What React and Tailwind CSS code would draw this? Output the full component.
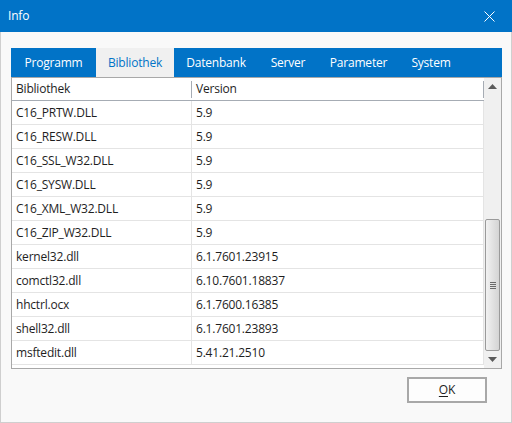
import React from "react";

// widths taken from the dialog, text is centred in each tab
const TABS = [
  { label: "Programm", width: "w-[85px]" },
  { label: "Bibliothek", width: "w-[78px]" },
  { label: "Datenbank", width: "w-[84px]" },
  { label: "Server", width: "w-[60px]" },
  { label: "Parameter", width: "w-[81px]" },
  { label: "System", width: "w-[64px]" },
];

const LIBS = [
  { name: "C16_PRTW.DLL", version: "5.9" },
  { name: "C16_RESW.DLL", version: "5.9" },
  { name: "C16_SSL_W32.DLL", version: "5.9" },
  { name: "C16_SYSW.DLL", version: "5.9" },
  { name: "C16_XML_W32.DLL", version: "5.9" },
  { name: "C16_ZIP_W32.DLL", version: "5.9" },
  { name: "kernel32.dll", version: "6.1.7601.23915" },
  { name: "comctl32.dll", version: "6.10.7601.18837" },
  { name: "hhctrl.ocx", version: "6.1.7600.16385" },
  { name: "shell32.dll", version: "6.1.7601.23893" },
  { name: "msftedit.dll", version: "5.41.21.2510" },
];

const ScrollBar = () => (
  <div className="w-[17px] bg-[#f0f0f0] flex flex-col shrink-0">
    {/* up arrow */}
    <div className="h-[17px] flex items-center justify-center">
      <svg width="9" height="5" viewBox="0 0 9 5">
        <path d="M0 5 L4.5 0 L9 5 Z" fill="#5a5a5a" />
      </svg>
    </div>
    <div className="flex-1 flex flex-col pt-[124px] px-[1px]">
      <div className="h-[132px] rounded-[2px] border border-[#9a9a9a] bg-gradient-to-r from-[#f2f2f2] via-[#e2e2e2] to-[#d4d4d4] flex items-center justify-center">
        <div className="flex flex-col gap-[1px]">
          <div className="w-[6px] h-px bg-[#6a6a6a]" />
          <div className="w-[6px] h-px bg-[#6a6a6a]" />
          <div className="w-[6px] h-px bg-[#6a6a6a]" />
          <div className="w-[6px] h-px bg-[#6a6a6a]" />
        </div>
      </div>
    </div>
    {/* down arrow */}
    <div className="h-[17px] flex items-center justify-center">
      <svg width="9" height="5" viewBox="0 0 9 5">
        <path d="M0 0 L9 0 L4.5 5 Z" fill="#5a5a5a" />
      </svg>
    </div>
  </div>
);

export default function App() {
  return (
    <div
      className="w-[512px] h-[423px] bg-[#f9f9f9] border-x border-b border-[#cfcfcf] flex flex-col text-[12px] tracking-[-0.2px] text-[#1e1e1e]"
      style={{ fontFamily: '"Open Sans", "Noto Sans", sans-serif' }}
    >
      {/* title bar */}
      <div className="h-[32px] bg-[#0173c7] flex items-center justify-between pl-[8px] pr-[17px] -mx-px text-white">
        <span className="text-[12px]">Info</span>
        <svg width="11" height="11" viewBox="0 0 11 11">
          <path d="M0.5 0.5 L10.5 10.5 M10.5 0.5 L0.5 10.5" stroke="#fff" strokeWidth="1" />
        </svg>
      </div>

      <div className="pt-[16px] pl-[10px] pr-[9px]">
        {/* tabs */}
        <div className="h-[29px] bg-[#0173c7] flex">
          {TABS.map((tab) => (
            <div
              key={tab.label}
              className={`${tab.width} flex items-center justify-center ${
                tab.label === "Bibliothek" ? "bg-[#f0f0f0] text-[#0173c7]" : "text-white"
              }`}
            >
              {tab.label}
            </div>
          ))}
        </div>

        {/* list */}
        <div className="h-[292px] border border-[#a8a8a8] bg-white flex">
          <div className="flex-1 flex flex-col">
            <div className="h-[23px] flex border-b border-[#a6acb4] items-center">
              <div className="w-[180px] pl-[4px] flex items-center border-r border-[#a6acb4] h-[17px]">
                Bibliothek
              </div>
              <div className="flex-1 pl-[4px] flex items-center h-[17px] border-r border-[#a6acb4]">
                Version
              </div>
            </div>
            {LIBS.map((lib) => (
              <div key={lib.name} className="h-[24px] flex border-b border-[#e4e4e4]">
                <div className="w-[180px] pl-[4px] flex items-center border-r border-[#e4e4e4]">
                  {lib.name}
                </div>
                <div className="flex-1 pl-[4px] flex items-center border-r border-[#e4e4e4]">
                  {lib.version}
                </div>
              </div>
            ))}
          </div>
          <ScrollBar />
        </div>
      </div>

      {/* footer */}
      <div className="flex justify-end pt-[8px] pr-[24px]">
        <button className="w-[80px] h-[26px] border-2 border-[#a8a8a8] bg-[#fdfdfd] text-[#1e1e1e]">
          <span className="underline underline-offset-2">O</span>K
        </button>
      </div>
    </div>
  );
}
